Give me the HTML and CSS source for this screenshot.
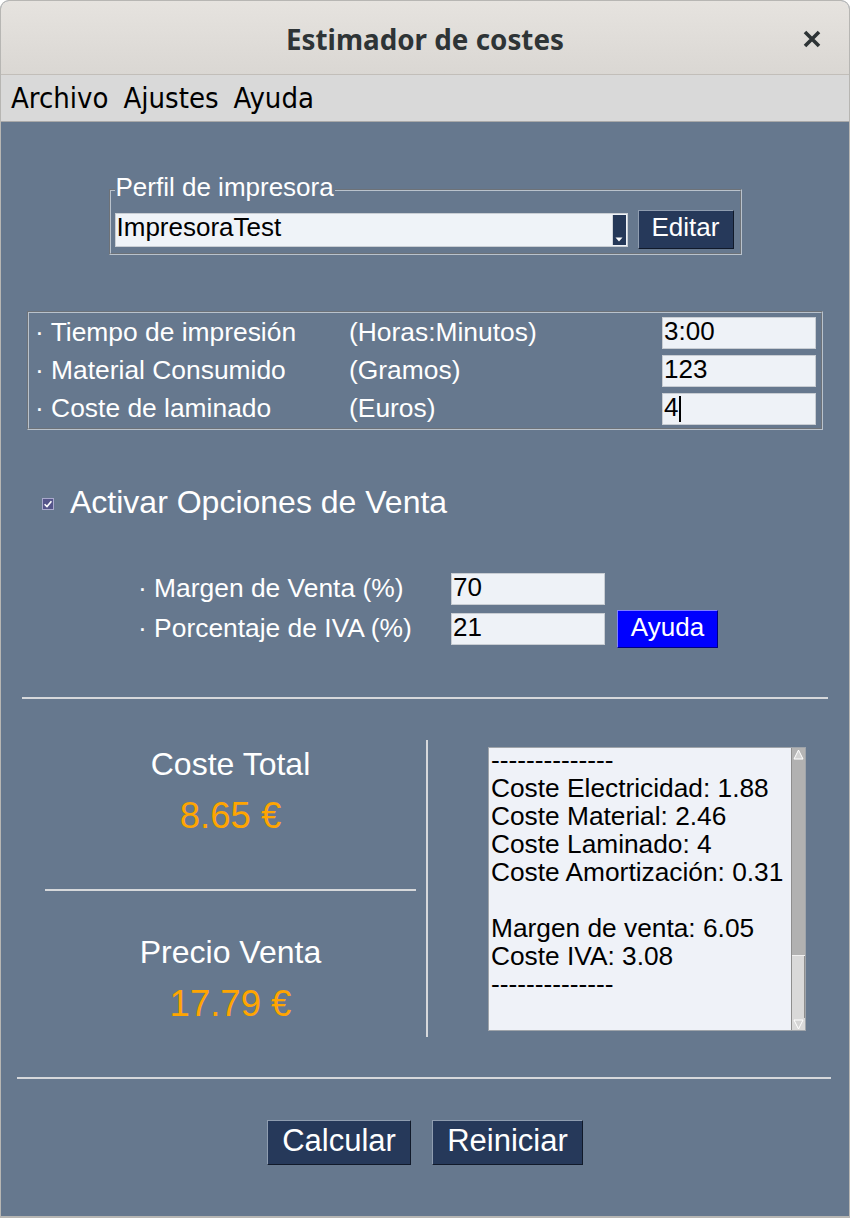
FILE: index.html
```html
<!DOCTYPE html>
<html lang="es">
<head>
<meta charset="utf-8">
<title>Estimador de costes</title>
<link rel="stylesheet" href="styles.css">
</head>
<body>
<div class="window">
  <header class="titlebar">
    <span class="title">Estimador de costes</span>
    <span class="close">
      <svg width="18" height="18" viewBox="0 0 18 18"><path d="M2 2 L16 16 M16 2 L2 16" stroke="#2e3436" stroke-width="3.6" stroke-linecap="butt"/></svg>
    </span>
  </header>
  <nav class="menubar">
    <span>Archivo</span>
    <span>Ajustes</span>
    <span>Ayuda</span>
  </nav>
  <main class="content">
    <fieldset class="profile">
      <legend>Perfil de impresora</legend>
      <div class="profile-row">
        <div class="combo">
          <span class="combo-text">ImpresoraTest</span>
          <span class="combo-arrow"><svg width="8" height="5" viewBox="0 0 8 5"><path d="M0.5 0.5 L7.5 0.5 L4 4.5 Z" fill="#fff"/></svg></span>
        </div>
        <button class="btn btn-dark btn-edit">Editar</button>
      </div>
    </fieldset>

    <div class="inputs">
      <span class="lbl">· Tiempo de impresión</span><span class="lbl">(Horas:Minutos)</span><span class="entry">3:00</span>
      <span class="lbl">· Material Consumido</span><span class="lbl">(Gramos)</span><span class="entry">123</span>
      <span class="lbl">· Coste de laminado</span><span class="lbl">(Euros)</span><span class="entry">4<span class="caret"></span></span>
    </div>

    <div class="check-row">
      <svg class="checkbox" width="12" height="12" viewBox="0 0 12 12"><rect x="0.5" y="0.5" width="11" height="11" fill="#55558a" stroke="#a9a9cc"/><path d="M2.6 6.2 L5 8.6 L9.4 3.2" fill="none" stroke="#fff" stroke-width="1.6"/></svg>
      <span class="check-label">Activar Opciones de Venta</span>
    </div>

    <div class="sales">
      <span class="lbl">· Margen de Venta (%)</span><span class="entry">70</span><span></span>
      <span class="lbl">· Porcentaje de IVA (%)</span><span class="entry">21</span><button class="btn btn-blue">Ayuda</button>
    </div>

    <div class="sep sep-mid"></div>

    <div class="results">
      <div class="totals">
        <span class="t-label t-first">Coste Total</span>
        <span class="t-value">8.65 €</span>
        <div class="hsep"></div>
        <span class="t-label t-second">Precio Venta</span>
        <span class="t-value">17.79 €</span>
      </div>
      <div class="vsep"></div>
      <div class="detail">
        <div class="detail-text">--------------
Coste Electricidad: 1.88
Coste Material: 2.46
Coste Laminado: 4
Coste Amortización: 0.31

Margen de venta: 6.05
Coste IVA: 3.08
--------------</div>
        <div class="scrollbar">
          <div class="sb-arrow sb-up"><svg width="11" height="11" viewBox="0 0 11 11"><path d="M5.5 1 L10 10 L1 10 Z" fill="#d4d4d4" stroke="#fff" stroke-width="1"/></svg></div>
          <div class="sb-thumb"></div>
          <div class="sb-trough"></div>
          <div class="sb-arrow sb-down"><svg width="11" height="11" viewBox="0 0 11 11"><path d="M1 1 L10 1 L5.5 10 Z" fill="#d4d4d4" stroke="#fff" stroke-width="1"/></svg></div>
        </div>
      </div>
    </div>

    <div class="sep sep-bottom"></div>

    <div class="actions">
      <button class="btn btn-dark btn-calc">Calcular</button>
      <button class="btn btn-dark btn-reset">Reiniciar</button>
    </div>
  </main>
</div>
</body>
</html>
```
FILE: styles.css
```css
html, body {
  margin: 0;
  padding: 0;
  background: #ffffff;
}

.window {
  width: 850px;
  height: 1218px;
  box-sizing: border-box;
  border: 1px solid #b7b6b3;
  border-bottom-width: 2px;
  border-radius: 9px 9px 0 0;
  overflow: hidden;
  background: #66788e;
  display: flex;
  flex-direction: column;
  font-family: "Liberation Sans", Arial, sans-serif;
}

.titlebar {
  height: 73px;
  flex: none;
  display: grid;
  grid-template-columns: 1fr auto 1fr;
  align-items: center;
  background: linear-gradient(#e6e3df, #dad7d3);
  border-bottom: 1px solid #c2beb9;
}

.title {
  grid-column: 2;
  font-family: "Noto Sans", "DejaVu Sans", sans-serif;
  font-weight: 700;
  font-size: 27.8px;
  color: #2e3436;
  padding-top: 3px;
}

.close {
  grid-column: 3;
  justify-self: end;
  margin-right: 28px;
  display: flex;
  padding-top: 3px;
}

.menubar {
  height: 47px;
  flex: none;
  box-sizing: border-box;
  background: #d9d9d9;
  display: flex;
  align-items: center;
  gap: 15px;
  padding-left: 10px;
  font-family: "DejaVu Sans Condensed", "DejaVu Sans", sans-serif;
  font-stretch: condensed;
  font-size: 29px;
  color: #000;
  border-bottom: 1px solid #a9a9a9;
}

.content {
  flex: 1;
  display: flex;
  flex-direction: column;
  align-items: center;
  padding-top: 50px;
  color: #ffffff;
  font-size: 26px;
}

/* Profile frame */
.profile {
  width: 633px;
  box-sizing: border-box;
  margin: 0;
  padding: 2px 6px 4px 4px;
  border: 2px groove #b9c2cc;
  min-inline-size: 0;
}

.profile legend {
  padding: 0 1px 6px 1px;
  font-size: 26px;
  line-height: 30px;
  color: #ffffff;
}

.profile-row {
  display: flex;
  align-items: center;
  gap: 10px;
}

.combo {
  width: 513px;
  height: 34px;
  box-sizing: border-box;
  border: 1px solid #c9ced4;
  background: #eff3f8;
  display: flex;
  color: #000;
}

.combo-text {
  flex: 1;
  padding-left: 1px;
  line-height: 27px;
}

.combo-arrow {
  width: 14px;
  margin: 1px 1px 1px 0;
  background: #253858;
  border-left: 1px solid #d0d4da;
  display: flex;
  align-items: flex-end;
  justify-content: center;
  padding-bottom: 3px;
  box-sizing: border-box;
}

.btn {
  margin: 0;
  padding: 0;
  font-family: "Liberation Sans", Arial, sans-serif;
  font-size: 26px;
  color: #ffffff;
  box-sizing: border-box;
  border: 1px solid;
  cursor: default;
}

.btn-dark {
  background: #26395a;
  border-color: #8f9db0 #111a2a #111a2a #8f9db0;
}

.btn-edit {
  width: 96px;
  height: 39px;
  padding-bottom: 4px;
}

/* Inputs frame */
.inputs {
  margin-top: 56px;
  width: 796px;
  box-sizing: border-box;
  border: 2px groove #b9c2cc;
  padding: 1px 5px 0 6px;
  display: grid;
  grid-template-columns: 314px 1fr 154px;
  grid-auto-rows: 38px;
  align-items: center;
}

.lbl {
  white-space: nowrap;
  line-height: 30px;
  font-size: 26.4px;
}

.inputs .lbl {
  margin-top: -3px;
}

.entry {
  height: 32px;
  box-sizing: border-box;
  background: #eef2f7;
  border: 1px solid #c8cdd3;
  padding: 0 1px 3px 1px;
  line-height: 27px;
  color: #000;
  display: flex;
  align-items: center;
}

.caret {
  display: inline-block;
  width: 2px;
  height: 26px;
  background: #000;
  margin-left: 1px;
  margin-top: 3px;
}

/* Checkbox */
.check-row {
  align-self: stretch;
  margin-top: 52px;
  height: 40px;
  display: flex;
  align-items: center;
  padding-left: 41px;
  gap: 16px;
}

.checkbox {
  flex: none;
  margin-top: 3px;
}

.check-label {
  font-size: 32px;
  line-height: 40px;
}

/* Sales */
.sales {
  align-self: stretch;
  margin-top: 47px;
  padding-left: 137px;
  display: grid;
  grid-template-columns: 313px 154px 113px;
  grid-auto-rows: 40px;
  align-items: center;
}

.sales .lbl {
  margin-top: -3px;
}

.btn-blue {
  width: 101px;
  height: 38px;
  margin-left: 12px;
  background: #0000ff;
  border-color: #8080ff #000080 #000080 #8080ff;
  padding-bottom: 4px;
}

/* Separators */
.sep {
  align-self: stretch;
  height: 2px;
  background: #d6d8db;
  flex: none;
}

.sep-mid {
  margin: 48px 21px 0 21px;
}

.sep-bottom {
  margin: 40px 18px 0 16px;
}

/* Results */
.results {
  align-self: stretch;
  margin-top: 41px;
  height: 297px;
  display: flex;
  padding-left: 44px;
}

.totals {
  width: 371px;
  display: flex;
  flex-direction: column;
  align-items: center;
  text-align: center;
}

.t-label {
  font-size: 32px;
  line-height: 40px;
}

.t-first {
  margin-top: 4px;
}

.t-second {
  margin-top: 41px;
}

.t-value {
  margin-top: 10px;
  font-size: 36.5px;
  line-height: 44px;
  color: #ffa500;
}

.hsep {
  align-self: stretch;
  margin-top: 51px;
  height: 2px;
  background: #d6d8db;
}

.vsep {
  width: 2px;
  margin-left: 10px;
  background: #d6d8db;
}

.detail {
  margin-left: 60px;
  margin-top: 7px;
  width: 318px;
  height: 284px;
  box-sizing: border-box;
  border: 1px solid #9fa4aa;
  background: #eff2f8;
  display: flex;
}

.detail-text {
  flex: 1;
  min-width: 0;
  margin-top: -2px;
  padding-left: 2px;
  white-space: pre;
  font-size: 26.3px;
  line-height: 28px;
  color: #000;
}

.scrollbar {
  width: 13px;
  flex: none;
  display: flex;
  flex-direction: column;
  border-left: 1px solid #8e8e8e;
  background: #d9d9d9;
}

.sb-arrow {
  height: 12px;
  flex: none;
  display: flex;
  align-items: center;
  justify-content: center;
  background: #b4b4b4;
}

.sb-down {
  background: #d9d9d9;
}

.sb-thumb {
  height: 195px;
  flex: none;
  background: #b1b1b1;
  border-bottom: 1px solid #f0f0f0;
}

.sb-trough {
  flex: 1;
  background: #d9d9d9;
  border-right: 1px solid #8e8e8e;
}

/* Actions */
.actions {
  margin-top: 41px;
  display: flex;
  gap: 21px;
  justify-content: center;
}

.btn-calc,
.btn-reset {
  height: 45px;
  font-size: 31px;
  padding-bottom: 4px;
}

.btn-calc {
  width: 144px;
}

.btn-reset {
  width: 151px;
}
```
